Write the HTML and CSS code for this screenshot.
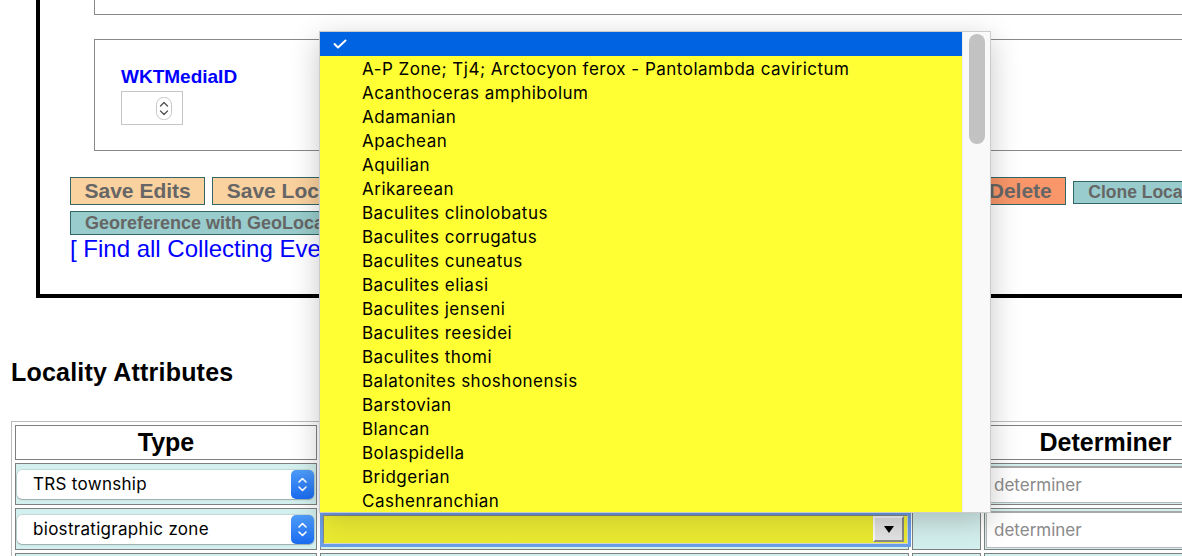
FILE: index.html
```html
<!DOCTYPE html>
<html lang="en">
<head>
<meta charset="utf-8">
<title>Locality</title>
<link rel="stylesheet" href="styles.css">
</head>
<body>
<div class="locbox">
  <div class="panel panel-top"></div>
  <div class="panel panel-media">
    <label class="media-label">WKTMediaID</label>
    <div class="num-input">
      <svg class="spinner" width="16" height="23" viewBox="0 0 16 23">
        <rect x="0.5" y="0.5" width="15" height="22" rx="7" fill="#fff" stroke="#c6c6c6"/>
        <polyline points="4.5,9 8,5.5 11.5,9" fill="none" stroke="#555" stroke-width="1.4" stroke-linecap="round" stroke-linejoin="round"/>
        <polyline points="4.5,14 8,17.5 11.5,14" fill="none" stroke="#555" stroke-width="1.4" stroke-linecap="round" stroke-linejoin="round"/>
      </svg>
    </div>
  </div>
  <div class="btn-row btn-row-main">
    <button type="button" class="btn btn-lg btn-save">Save Edits</button>
    <div class="hidden-group">
      <button type="button" class="btn btn-lg btn-save">Save Locality Only</button>
      <button type="button" class="btn btn-lg btn-save btn-fill">Create Collecting Event</button>
    </div>
    <button type="button" class="btn btn-lg btn-delete">Delete</button>
    <button type="button" class="btn btn-sm btn-clone">Clone Locality</button>
  </div>
  <div class="btn-row btn-row-geo">
    <button type="button" class="btn btn-sm btn-clone btn-geo">Georeference with GeoLocate</button>
  </div>
  <a class="find-link">[ Find all Collecting Events at this Locality ]</a>
</div>

<h3 class="section-title">Locality Attributes</h3>

<table class="attr-table">
  <thead>
    <tr>
      <th class="c1">Type</th>
      <th class="c2">Value</th>
      <th class="c3">Units</th>
      <th class="c4">Determiner</th>
    </tr>
  </thead>
  <tbody>
    <tr>
      <td>
        <div class="mac-select">
          <span class="mac-select-text">TRS township</span>
          <span class="stepper">
            <svg width="23" height="29" viewBox="0 0 23 29">
              <polyline points="8,12 11.5,8.5 15,12" fill="none" stroke="#fff" stroke-width="1.6" stroke-linecap="round" stroke-linejoin="round"/>
              <polyline points="8,17 11.5,20.5 15,17" fill="none" stroke="#fff" stroke-width="1.6" stroke-linecap="round" stroke-linejoin="round"/>
            </svg>
          </span>
        </div>
      </td>
      <td></td>
      <td></td>
      <td><div class="det-input">determiner</div></td>
    </tr>
    <tr>
      <td>
        <div class="mac-select">
          <span class="mac-select-text">biostratigraphic zone</span>
          <span class="stepper">
            <svg width="23" height="29" viewBox="0 0 23 29">
              <polyline points="8,12 11.5,8.5 15,12" fill="none" stroke="#fff" stroke-width="1.6" stroke-linecap="round" stroke-linejoin="round"/>
              <polyline points="8,17 11.5,20.5 15,17" fill="none" stroke="#fff" stroke-width="1.6" stroke-linecap="round" stroke-linejoin="round"/>
            </svg>
          </span>
        </div>
      </td>
      <td>
        <div class="ysel">
          <span class="ysel-body"></span>
          <span class="ysel-btn">
            <svg width="10" height="7" viewBox="0 0 10 7"><polygon points="0,0 10,0 5,7" fill="#000"/></svg>
          </span>
        </div>
      </td>
      <td></td>
      <td><div class="det-input">determiner</div></td>
    </tr>
    <tr>
      <td></td>
      <td></td>
      <td></td>
      <td></td>
    </tr>
  </tbody>
</table>

<div class="popup">
  <ul class="popup-list">
    <li class="sel">
      <svg width="14" height="10" viewBox="0 0 14 10"><polyline points="1.5,5 5,8.5 12.5,1.5" fill="none" stroke="#fff" stroke-width="2" stroke-linecap="round" stroke-linejoin="round"/></svg>
    </li>
    <li>A-P Zone; Tj4; Arctocyon ferox - Pantolambda cavirictum</li>
    <li>Acanthoceras amphibolum</li>
    <li>Adamanian</li>
    <li>Apachean</li>
    <li>Aquilian</li>
    <li>Arikareean</li>
    <li>Baculites clinolobatus</li>
    <li>Baculites corrugatus</li>
    <li>Baculites cuneatus</li>
    <li>Baculites eliasi</li>
    <li>Baculites jenseni</li>
    <li>Baculites reesidei</li>
    <li>Baculites thomi</li>
    <li>Balatonites shoshonensis</li>
    <li>Barstovian</li>
    <li>Blancan</li>
    <li>Bolaspidella</li>
    <li>Bridgerian</li>
    <li>Cashenranchian</li>
  </ul>
  <div class="scroll-track"><div class="scroll-thumb"></div></div>
</div>
</body>
</html>
```
FILE: styles.css
```css
html, body {
  margin: 0;
  padding: 0;
  overflow: hidden;
  background: #fff;
}
body {
  position: relative;
  width: 1182px;
  height: 556px;
  font-family: "Liberation Sans", Arial, sans-serif;
  color: #000;
}

/* locality box */
.locbox {
  margin-left: 36px;
  border-left: 4px solid #000;
  border-bottom: 4px solid #000;
  padding-bottom: 32px;
}
.panel {
  margin-left: 54px;
  border: 1px solid #888;
  border-right: none;
}
.panel-top {
  border-top: none;
  height: 14px;
}
.panel-media {
  margin-top: 24px;
  padding: 26px 0 25px 26px;
}
.media-label {
  display: block;
  color: #0000ff;
  font-weight: bold;
  font-size: 19px;
  line-height: 22px;
}
.num-input {
  margin-top: 3px;
  width: 62px;
  height: 34px;
  box-sizing: border-box;
  border: 1px solid #c4c4c4;
  display: flex;
  justify-content: flex-end;
  align-items: center;
  padding-right: 10px;
}

/* buttons */
.btn-row {
  display: flex;
  align-items: baseline;
  gap: 7px;
  margin-left: 30px;
  white-space: nowrap;
}
.btn-row-main { margin-top: 26px; }
.btn-row-geo { margin-top: 6px; }
.btn {
  flex: none;
  margin: 0;
  padding: 0 13.5px;
  box-sizing: border-box;
  font-family: "Liberation Sans", Arial, sans-serif;
  font-weight: bold;
  color: #666;
  border: 1px solid #336666;
  border-radius: 0;
  text-align: center;
}
.btn-lg { font-size: 21px; line-height: 26px; }
.btn-sm { font-size: 17.5px; line-height: 21px; padding: 0 14px; }
.btn-save { background: #fad29f; }
.btn-delete { background: #f9976a; }
.btn-clone { background: #99cccc; }
.btn-geo { line-height: 22px; font-size: 18px; }
.hidden-group {
  display: flex;
  align-items: baseline;
  gap: 7px;
  width: 755px;
  flex: none;
}
.btn-fill { flex: 1; }

.find-link {
  display: block;
  margin: 1px 0 0 30px;
  color: #0000ff;
  font-size: 24px;
  line-height: 26px;
  text-decoration: none;
}

.section-title {
  margin: 60px 0 35px 11px;
  font-size: 25px;
  line-height: 28px;
  font-weight: bold;
  letter-spacing: 0.2px;
}

/* attributes table */
.attr-table {
  margin-left: 11px;
  border: 1px solid #bbb;
  border-spacing: 3px;
  border-collapse: separate;
  table-layout: fixed;
  width: 1220px;
}
.attr-table th,
.attr-table td {
  border: 1px solid #7f7f7f;
  padding: 0;
  box-sizing: border-box;
}
.attr-table th {
  height: 35px;
  font-size: 25px;
  font-weight: bold;
  background: #fff;
}
.attr-table td {
  height: 42px;
  background: #d4f0ee;
}
.c1 { width: 302px; }
.c2 { width: 589px; }
.c3 { width: 69px; }
.c4 { width: 243px; }

.mac-select {
  display: flex;
  align-items: center;
  margin: 0 2px 0 1px;
  height: 29px;
  border-radius: 5px;
  background: #fff;
  box-shadow: 0 0 0 0.5px rgba(0,0,0,0.18), 0 1px 1.5px rgba(0,0,0,0.22);
  font-family: Inter, "Noto Sans", sans-serif;
  font-size: 17px;
  letter-spacing: 0.3px;
}
.mac-select-text { flex: 1; padding-left: 16px; }
.stepper {
  width: 23px;
  height: 29px;
  border-radius: 5px;
  background: linear-gradient(#4f9dfa, #1a6cf0);
  display: flex;
}

.ysel {
  display: flex;
  align-items: center;
  margin: 0 0 0 2px;
  height: 29px;
  box-sizing: border-box;
  border: 1px solid;
  border-color: #888 #d6d6d6 #d6d6d6 #888;
  background: linear-gradient(#f6f637, #eaea30);
  box-shadow: 0 0 0 3px #6a9fe8;
  padding-right: 3px;
}
.ysel-body { flex: 1; }
.ysel-btn {
  width: 31px;
  height: 26px;
  box-sizing: border-box;
  background: #e4e4e4;
  border: 2px solid;
  border-color: #fafafa #8a8a8a #8a8a8a #fafafa;
  display: flex;
  align-items: center;
  justify-content: center;
}

.det-input {
  margin-left: 1px;
  height: 37px;
  box-sizing: border-box;
  border: 1px solid #b8b8b8;
  border-top: 2px solid #a8a8a8;
  background: #fff;
  color: #8a8a8a;
  font-family: Inter, "Noto Sans", sans-serif;
  font-size: 17px;
  display: flex;
  align-items: center;
  padding-left: 7px;
}

/* open dropdown */
.popup {
  position: absolute;
  left: 319px;
  top: 31px;
  width: 672px;
  height: 482px;
  box-sizing: border-box;
  border: 1px solid #cbcbcb;
  background: #f9f9f9;
  display: flex;
  box-shadow: 0 8px 28px rgba(0,0,0,0.22);
}
.popup-list {
  width: 642px;
  margin: 0;
  padding: 0;
  list-style: none;
  background: #ffff33;
  font-family: Inter, "Noto Sans", sans-serif;
  font-size: 17px;
  letter-spacing: 0.5px;
  color: #000;
}
.popup-list li {
  height: 24px;
  box-sizing: border-box;
  padding-top: 1px;
  line-height: 24px;
  padding-left: 42px;
  white-space: nowrap;
}
.popup-list li.sel {
  background: #0063e1;
  padding-top: 0;
  padding-left: 13px;
  display: flex;
  align-items: center;
}
.scroll-track {
  flex: 1;
  border-left: 1px solid #ececec;
  padding: 2px 0 0 6px;
}
.scroll-thumb {
  width: 16px;
  height: 110px;
  border-radius: 8px;
  background: #c2c2c2;
}
```
